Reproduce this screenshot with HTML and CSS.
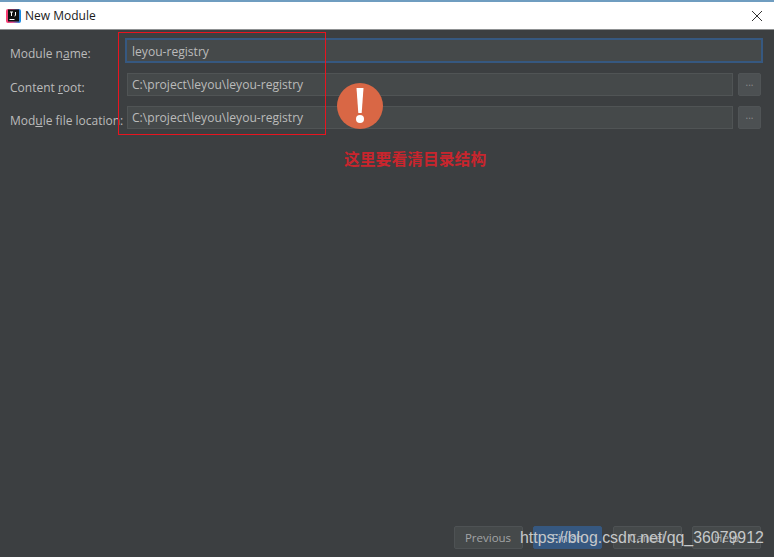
FILE: index.html
```html
<!DOCTYPE html>
<html lang="en">
<head>
  <meta charset="UTF-8">
  <title>New Module</title>
  <link rel="stylesheet" href="styles.css">
</head>
<body>
  <div class="dialog">
    <div class="titlebar">
      <svg class="app-icon" width="16" height="16" viewBox="0 0 16 16">
        <defs>
          <linearGradient id="logoGrad" x1="0" y1="0" x2="1" y2="0">
            <stop offset="0" stop-color="#fc3a6e"/>
            <stop offset="0.45" stop-color="#e0569a"/>
            <stop offset="1" stop-color="#0b8fe8"/>
          </linearGradient>
        </defs>
        <rect x="0" y="1" width="15" height="14" rx="2" fill="url(#logoGrad)"/>
        <rect x="2" y="1.5" width="11" height="12" fill="#111"/>
        <rect x="3.5" y="11" width="5" height="1" fill="#fff"/>
        <path d="M4 4h3M5.5 4v4M9.5 4v3.2q0 .8-1 .8" stroke="#fff" stroke-width="1" fill="none"/>
      </svg>
      <span class="title">New Module</span>
      <svg class="close" width="12" height="12" viewBox="0 0 12 12">
        <path d="M1 1l10 10M11 1L1 11" stroke="#333" stroke-width="1" fill="none"/>
      </svg>
    </div>

    <div class="form">
      <div class="row">
        <label>Module n<span class="ul">a</span>me:</label>
        <div class="field focused">leyou-registry</div>
      </div>
      <div class="row">
        <label>Content <span class="ul">r</span>oot:</label>
        <div class="field">C:\project\leyou\leyou-registry</div>
        <div class="browse">...</div>
      </div>
      <div class="row">
        <label>Mod<span class="ul">u</span>le file location:</label>
        <div class="field">C:\project\leyou\leyou-registry</div>
        <div class="browse">...</div>
      </div>
    </div>

    <div class="footer">
      <button>Previous</button>
      <button class="primary">Finish</button>
      <button>Cancel</button>
      <button>Help</button>
    </div>
  </div>

  <!-- annotations on top of the screenshot -->
  <div class="red-box"></div>
  <div class="warn-badge">
    <svg width="46" height="46" viewBox="0 0 46 46">
      <circle cx="23" cy="23" r="23" fill="#d96745"/>
      <path d="M19.5 5h7l-1.8 25h-3.4z" fill="#fff"/>
      <circle cx="23" cy="36" r="4" fill="#fff"/>
    </svg>
  </div>
  <div class="red-note">这里要看清目录结构</div>
  <div class="watermark">https://blog.csdn.net/qq_36079912</div>
</body>
</html>
```

FILE: styles.css
```css
* {
  margin: 0;
  padding: 0;
  box-sizing: border-box;
}

html, body {
  height: 100%;
  overflow: hidden;
}

body {
  font-family: "Open Sans", "Liberation Sans", sans-serif;
  background-color: #3c3f41;
  position: relative;
}

.dialog {
  height: 557px;
  display: flex;
  flex-direction: column;
}

.titlebar {
  height: 30px;
  flex: none;
  display: flex;
  align-items: center;
  padding: 0 10px 0 6px;
  background-color: #fff;
  border-top: 2px solid #6f9dc0;
  border-bottom: 1px solid #8f9192;
}

.app-icon {
  margin-right: 3px;
}

.title {
  font-size: 12px;
  color: #1a1a1a;
}

.close {
  margin-left: auto;
  margin-right: 1px;
}

.form {
  flex: 1;
  display: flex;
  flex-direction: column;
  gap: 10px;
  padding: 9px 13px 0 10px;
}

.row {
  display: flex;
  align-items: center;
  height: 23px;
}

.row:first-child {
  margin-bottom: 1px;
}

label {
  width: 117px;
  flex: none;
  padding-top: 5px;
  font-size: 12px;
  color: #bbbbbb;
  white-space: nowrap;
}

.ul {
  text-decoration: underline;
}

.field {
  flex: 1;
  height: 23px;
  line-height: 22px;
  padding-left: 4px;
  font-size: 12.1px;
  color: #bbbbbb;
  background-color: #45494a;
  border: 1px solid #505455;
}

.field.focused {
  margin-left: -2px;
  margin-right: -2px;
  padding-left: 5px;
  height: 25px;
  line-height: 24px;
  border: 2px solid #365880;
}

.browse {
  width: 23px;
  height: 23px;
  margin-left: 5px;
  flex: none;
  border-radius: 2px;
  text-align: center;
  font-size: 10px;
  line-height: 17px;
  color: #8c8c8c;
  background-color: #4c5052;
  border: 1px solid #505456;
}

.footer {
  display: flex;
  justify-content: flex-end;
  gap: 10.5px;
  padding: 0 13px 8px 0;
}

button {
  width: 69px;
  height: 23px;
  font-family: inherit;
  font-size: 11.5px;
  color: #a3a5a6;
  background-color: #45494a;
  border: 1px solid #4e5254;
  border-radius: 2px;
}

button.primary {
  background-color: #365880;
  border-color: #365880;
  color: #a9bcd0;
}

.red-box {
  position: absolute;
  left: 118px;
  top: 32px;
  width: 208px;
  height: 103px;
  border: 1px solid #e8141f;
}

.warn-badge {
  position: absolute;
  left: 337px;
  top: 83px;
  width: 46px;
  height: 46px;
}

.red-note {
  position: absolute;
  left: 344px;
  top: 151px;
  font-family: "Liberation Serif", "Noto Sans CJK SC", serif;
  font-size: 15.8px;
  font-weight: bold;
  line-height: 18px;
  color: #c9252d;
}

.watermark {
  position: absolute;
  left: 520px;
  top: 528px;
  font-family: "Liberation Sans", sans-serif;
  font-size: 15.9px;
  line-height: 20px;
  color: #c6c8c9;
  white-space: nowrap;
}
```
